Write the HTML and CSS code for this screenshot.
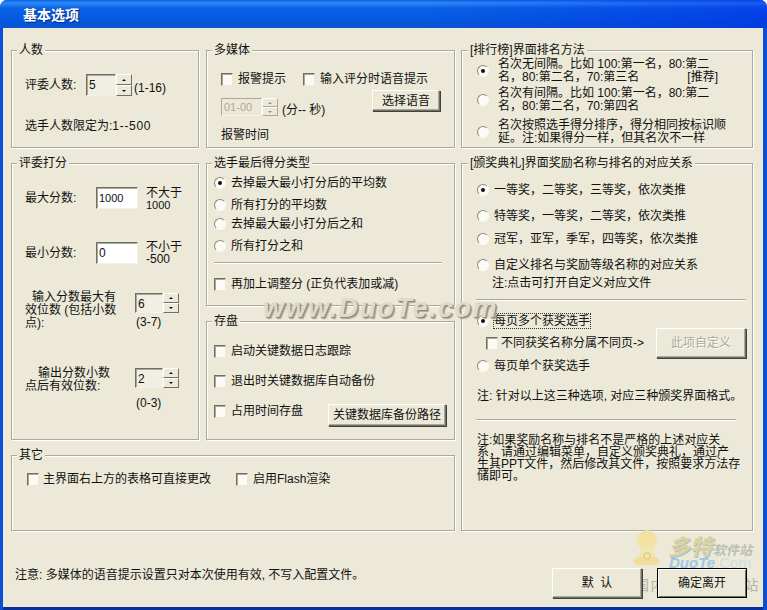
FILE: index.html
```html
<!DOCTYPE html>
<html lang="zh">
<head>
<meta charset="utf-8">
<title>基本选项</title>
<link rel="stylesheet" href="styles.css">
</head>
<body>
<div class="window">
  <div class="titlebar">基本选项</div>
  <div class="client">
    <section class="group g-people">
      <div class="legend">人数</div>
      <div class="row mt17 ml13">
        <span class="label w61 lh22">评委人数:</span>
        <span class="input flat w30 h22">5</span>
        <span class="spin h22"><i class="up"></i><i class="down"></i></span>
        <span class="unit lh22 ml2 mt3">(1-16)</span>
      </div>
      <p class="text mt20 ml13">选手人数限定为:<span class="wide">1--500</span></p>
    </section>

    <section class="group g-media">
      <div class="legend">多媒体</div>
      <div class="row mt15 ml14">
        <label class="opt gap5"><i class="chk"></i>报警提示</label>
        <label class="opt gap5 ml17"><i class="chk"></i>输入评分时语音提示</label>
      </div>
      <div class="row mt4 ml14">
        <span class="input off w41 h18 mt8">01-00</span>
        <span class="spin off h18 mt8"><i class="up"></i><i class="down"></i></span>
        <span class="unit ml4 mt13">(分-- 秒)</span>
        <button class="btn w68 h21 push mr14" type="button">选择语音</button>
      </div>
      <p class="text mt11 ml14">报警时间</p>
    </section>

    <section class="group g-rank">
      <div class="legend">[排行榜]界面排名方法</div>
      <label class="opt gap9 ml14 mt1 tight"><i class="radio on"></i><span>名次无间隔。比如 100:第一名，80:第二<br>名，80:第二名，70:第三名&emsp;&emsp;&emsp;&emsp;[推荐]</span></label>
      <label class="opt gap9 ml14 mt3 tight"><i class="radio"></i><span>名次有间隔。比如 100:第一名，80:第二<br>名，80:第二名，70:第四名</span></label>
      <label class="opt gap9 ml14 mt6 tight"><i class="radio"></i><span>名次按照选手得分排序，得分相同按标识顺<br>延。注:如果得分一样，但其名次不一样</span></label>
    </section>

    <section class="group g-score">
      <div class="legend">评委打分</div>
      <div class="row mt17 ml13">
        <span class="label w71 lh22">最大分数:</span>
        <span class="input w42 h22 num">1000</span>
        <span class="hint ml8">不大于<br><span class="num">1000</span></span>
      </div>
      <div class="row mt31 ml13">
        <span class="label w71 lh22">最小分数:</span>
        <span class="input w42 h22">0</span>
        <span class="hint ml8 mtn1">不小于<br>-500</span>
      </div>
      <div class="row mt26 ml13">
        <span class="label w110 tight indent7">输入分数最大有<br>效位数 (包括小数<br>点):</span>
        <div class="stack">
          <div class="row mt2">
            <span class="input flat w28 h20">6</span>
            <span class="spin h20"><i class="up"></i><i class="down"></i></span>
          </div>
          <span class="unit mt2 ml1">(3-7)</span>
        </div>
      </div>
      <div class="row mt37 ml13">
        <span class="label w110 tight indent13">输出分数小数<br>点后有效位数:</span>
        <div class="stack">
          <div class="row mt1">
            <span class="input flat w28 h20">2</span>
            <span class="spin h20"><i class="up"></i><i class="down"></i></span>
          </div>
          <span class="unit mt8 ml1">(0-3)</span>
        </div>
      </div>
    </section>

    <section class="group g-final">
      <div class="legend">选手最后得分类型</div>
      <label class="opt gap5 ml7 mt6"><i class="radio on"></i>去掉最大最小打分后的平均数</label>
      <label class="opt gap5 ml7 mt8"><i class="radio"></i>所有打分的平均数</label>
      <label class="opt gap5 ml7 mt5"><i class="radio"></i>去掉最大最小打分后之和</label>
      <label class="opt gap5 ml7 mt8"><i class="radio"></i>所有打分之和</label>
      <div class="sep w228 ml7 mt9"></div>
      <label class="opt gap5 ml7 mt13"><i class="chk"></i>再加上调整分 (正负代表加或减)</label>
    </section>

    <section class="group g-save">
      <div class="legend">存盘</div>
      <label class="opt gap5 ml7 mt16"><i class="chk"></i>启动关键数据日志跟踪</label>
      <label class="opt gap5 ml7 mt16"><i class="chk"></i>退出时关键数据库自动备份</label>
      <div class="row ml7 mt16">
        <label class="opt gap5"><i class="chk"></i>占用时间存盘</label>
        <button class="btn w118 h22 push mr8" type="button">关键数据库备份路径</button>
      </div>
    </section>

    <section class="group g-other">
      <div class="legend">其它</div>
      <div class="row ml15 mt10">
        <label class="opt gap4"><i class="chk"></i>主界面右上方的表格可直接更改</label>
        <label class="opt gap5 ml25"><i class="chk"></i>启用Flash渲染</label>
      </div>
    </section>

    <section class="group g-award">
      <div class="legend">[颁奖典礼]界面奖励名称与排名的对应关系</div>
      <label class="opt gap5 ml14 mt13"><i class="radio on"></i>一等奖，二等奖，三等奖，依次类推</label>
      <label class="opt gap5 ml14 mt12"><i class="radio"></i>特等奖，一等奖，二等奖，依次类推</label>
      <label class="opt gap5 ml14 mt9"><i class="radio"></i>冠军，亚军，季军，四等奖，依次类推</label>
      <label class="opt gap5 ml14 mt12"><i class="radio"></i>自定义排名与奖励等级名称的对应关系</label>
      <p class="text ml29 mt4">注:点击可打开自定义对应文件</p>
      <div class="sep w270 ml13 mt9"></div>
      <label class="opt gap5 ml14 mt13"><i class="radio on"></i><span class="focus">每页多个获奖选手</span></label>
      <div class="row center h30 ml23">
        <label class="opt gap3"><i class="chk"></i>不同获奖名称分属不同页-&gt;</label>
        <button class="btn w90 h30 push mr6" type="button" disabled>此项自定义</button>
      </div>
      <label class="opt gap5 ml14 mt1"><i class="radio"></i>每页单个获奖选手</label>
      <p class="text ml14 mt16">注: 针对以上这三种选项, 对应三种颁奖界面格式。</p>
      <div class="sep w260 ml13 mt16"></div>
      <p class="text para ml14 mt13">注:如果奖励名称与排名不是严格的上述对应关<br>系，请通过编辑菜单，自定义颁奖典礼，通过产<br>生其PPT文件，然后修改其文件，按照要求方法存<br>储即可。</p>
    </section>

    <footer class="footer">
      <p class="text note">注意: 多媒体的语音提示设置只对本次使用有效, 不写入配置文件。</p>
      <div class="actions">
        <button class="btn w90 h30" type="button">默&nbsp;&nbsp;认</button>
        <button class="btn w90 h30 primary" type="button">确定离开</button>
      </div>
    </footer>
  </div>

  <div class="watermark">www.DuoTe.com</div>
  <div class="logo">
    <svg class="mascot" width="28" height="42" viewBox="0 0 28 42" aria-hidden="true">
      <circle cx="15" cy="10" r="10" fill="#f3e2a4"/>
      <ellipse cx="15" cy="25" rx="8" ry="8" fill="#f4e6b2"/>
      <path d="M1 31 Q8 22 15 30 Q22 22 28 31 L25 35 L4 35 Z" fill="#f2dd9a"/>
      <circle cx="15" cy="26" r="3" fill="none" stroke="#e4cf86" stroke-width="1.5"/>
    </svg>
    <div class="brand-cn">多特<small>软件站</small></div>
    <div class="brand-en">DuoTe<span>.Com</span></div>
    <div class="brand-sub">国内最好的软件站</div>
  </div>
</div>
</body>
</html>
```

FILE: styles.css
```css
* { box-sizing: border-box; }
html, body { margin: 0; padding: 0; }
body { width: 767px; height: 610px; overflow: hidden; background: #fff; }
.window {
  position: relative; width: 767px; height: 610px; display: flex; flex-direction: column;
  background: #0a4fd6; border-radius: 7px 7px 0 0; overflow: hidden;
  font: 12px/14px "Liberation Sans", "Noto Sans CJK SC", sans-serif; color: #111;
}
.titlebar {
  height: 28px; padding-left: 23px; color: #fff; font-size: 14px; font-weight: bold; line-height: 31px;
  text-shadow: 1px 1px 1px #0a2a80;
  background:
    linear-gradient(90deg, transparent 55%, rgba(0, 30, 235, .45) 100%),
    linear-gradient(#0a5fe8 0, #2f8cf4 3px, #0a62e6 8px, #0558df 20px, #0a55d0 28px);
}
.client {
  flex: 1; margin: 0 4px 3px 3px; padding: 22px 0 0 8px; background: #ece9d8;
  display: grid; grid-template-columns: 188px 249px 291px; column-gap: 7px; row-gap: 15px;
  grid-template-rows: 98px 143px 119px 76px 1fr; box-shadow: 0 3px 0 #06309c;
}
.group { border: 1px solid #aca899; box-shadow: 1px 1px 0 #fff, inset 1px 1px 0 #fff; min-width: 0; }
.g-people { grid-column: 1; grid-row: 1; }
.g-media { grid-column: 2; grid-row: 1; }
.g-rank { grid-column: 3; grid-row: 1; margin-left: -1px; padding-left: 1px; }
.g-score { grid-column: 1; grid-row: 2 / 4; }
.g-final { grid-column: 2; grid-row: 2; }
.g-save { grid-column: 2; grid-row: 3; }
.g-other { grid-column: 1 / 3; grid-row: 4; }
.g-award { grid-column: 3; grid-row: 2 / 5; margin-left: -1px; padding-left: 1px; }
.legend { display: table; margin: -8px 0 0 5px; padding: 0 2px; height: 14px; background: #ece9d8; white-space: nowrap; }
.text { margin-bottom: 0; margin-right: 0; white-space: nowrap; }
p.text { margin-top: 0; }
.row { display: flex; align-items: flex-start; }
.row.center { align-items: center; }
.opt { display: flex; align-items: center; white-space: nowrap; }
.stack { display: flex; flex-direction: column; }
.label, .unit, .hint { white-space: nowrap; }
.hint { line-height: 12px; }
.num { font-size: 11px; }
.wide { letter-spacing: .7px; }
.tight { line-height: 13px; }
.indent7 { text-indent: 7px; }
.indent13 { text-indent: 13px; }
.para { line-height: 12px; }
.input {
  display: block; padding: 3px 0 0 2px; background: #fff; line-height: 14px;
  border: 1px solid; border-color: #716f64 #f4f2e8 #f4f2e8 #716f64;
  box-shadow: inset 1px 1px 0 #aca899;
}
.input.flat { background: #f1efe3; }
.input.off { background: #ece9d8; color: #aca899; padding-top: 1px; font-size: 11px; border-color: #aca899 #f4f2e8 #f4f2e8 #aca899; box-shadow: none; }
.spin { display: flex; flex-direction: column; width: 16px; }
.spin i {
  flex: 1; display: flex; align-items: center; justify-content: center; background: #ece9d8;
  border: 1px solid; border-color: #fff #716f64 #716f64 #fff;
}
.spin i::before { content: ""; border: 2px solid transparent; }
.spin .up::before { border-bottom-color: #111; border-top-width: 0; }
.spin .down::before { border-top-color: #111; border-bottom-width: 0; }
.spin.off i { border-color: #fff #aca899 #aca899 #fff; }
.spin.off i::before { opacity: .4; }
.chk {
  flex: none; display: block; width: 12px; height: 13px; background: #fbfaf5;
  border: 1px solid; border-color: #716f64 #ece9d8 #ece9d8 #716f64; box-shadow: inset 1px 1px 0 #aca899;
}
.radio {
  flex: none; display: flex; align-items: center; justify-content: center; width: 12px; height: 12px;
  border-radius: 50%; background: #fbfaf5; border: 1px solid; border-color: #8d8b7c #fbfaf5 #fbfaf5 #8d8b7c;
}
.radio.on::before { content: ""; width: 4px; height: 4px; border-radius: 50%; background: #111; }
.btn {
  display: block; padding: 0; background: #ece9d8; color: #111; font: inherit; flex: none;
  border: 1px solid; border-color: #fff #716f64 #716f64 #fff; box-shadow: 1px 1px 0 #404040, inset -1px -1px 0 #aca899;
}
.btn:disabled { color: #aca899; text-shadow: 1px 1px 0 #fff; }
.btn.primary { border-color: #000; box-shadow: inset 1px 1px 0 #fff, inset -1px -1px 0 #716f64; }
.push { margin-left: auto; }
.sep { height: 2px; background: #aca899; border-bottom: 1px solid #fff; }
.focus { outline: 1px dotted #333; outline-offset: 0; }
.footer {
  grid-column: 1 / 4; grid-row: 5; margin-top: -15px; display: flex; justify-content: space-between; align-items: flex-start;
  padding: 37px 6px 0 4px; min-height: 0; position: relative;
}
.note { margin-top: -6px; }
.actions { display: flex; gap: 15px; position: relative; z-index: 2; }
.watermark {
  position: absolute; left: 263px; top: 294px; font: italic bold 27px/28px "Liberation Sans", sans-serif; letter-spacing: 1.5px;
  color: #dedbcb; text-shadow: 1px 1px 0 #8f8c80, 2px 2px 1px #aaa79a; white-space: nowrap; pointer-events: none;
}
.logo { position: absolute; left: 632px; top: 530px; width: 135px; height: 80px; pointer-events: none; }
.mascot { position: absolute; left: 0; top: 0; }
.brand-cn { position: absolute; left: 36px; top: 5px; font: italic bold 22px/20px "Noto Sans CJK SC", sans-serif; color: #dcd39e; text-shadow: 1px 1px 0 #a9bcc0; white-space: nowrap; }
.brand-cn small { font-size: 13px; margin-left: 1px; color: #b9bfb4; text-shadow: none; }
.brand-en { position: absolute; left: 37px; top: 26px; font: italic bold 15px/13px "Liberation Sans", sans-serif; color: #9fc5ec; white-space: nowrap; }
.brand-en span { font-weight: normal; font-style: normal; color: #cfdcdf; }
.brand-sub { position: absolute; left: 3px; top: 46px; font: 14px/16px "Noto Sans CJK SC", sans-serif; letter-spacing: 1.6px; color: #b5b2a5; white-space: nowrap; }
.w28 { width: 28px; } .w30 { width: 30px; } .w41 { width: 41px; } .w42 { width: 42px; }
.w61 { width: 61px; } .w68 { width: 68px; } .w71 { width: 71px; } .w90 { width: 90px; }
.w110 { width: 110px; } .w118 { width: 118px; } .w228 { width: 228px; } .w260 { width: 260px; } .w270 { width: 270px; }
.h18 { height: 18px; } .h20 { height: 20px; } .h21 { height: 21px; } .h22 { height: 22px; } .h30 { height: 30px; }
.lh22 { line-height: 22px; }
.gap3 { gap: 3px; } .gap4 { gap: 4px; } .gap5 { gap: 5px; } .gap9 { gap: 9px; }
.ml1 { margin-left: 1px; } .ml2 { margin-left: 2px; } .ml4 { margin-left: 4px; } .ml7 { margin-left: 7px; } .ml8 { margin-left: 8px; }
.ml13 { margin-left: 13px; } .ml14 { margin-left: 14px; } .ml15 { margin-left: 15px; } .ml17 { margin-left: 17px; }
.ml23 { margin-left: 23px; } .ml25 { margin-left: 25px; } .ml29 { margin-left: 29px; }
.mr6 { margin-right: 6px; } .mr8 { margin-right: 8px; } .mr14 { margin-right: 14px; }
.mtn1 { margin-top: -1px; }
.mt1 { margin-top: 1px; } .mt2 { margin-top: 2px; } .mt3 { margin-top: 3px; } .mt4 { margin-top: 4px; } .mt5 { margin-top: 5px; }
.mt6 { margin-top: 6px; } .mt8 { margin-top: 8px; } .mt9 { margin-top: 9px; } .mt10 { margin-top: 10px; } .mt11 { margin-top: 11px; }
.mt12 { margin-top: 12px; } .mt13 { margin-top: 13px; } .mt15 { margin-top: 15px; } .mt16 { margin-top: 16px; } .mt17 { margin-top: 17px; }
.mt20 { margin-top: 20px; } .mt26 { margin-top: 26px; } .mt31 { margin-top: 31px; } .mt37 { margin-top: 37px; }
p.mt4 { margin-top: 4px; } p.mt11 { margin-top: 11px; } p.mt13 { margin-top: 13px; } p.mt16 { margin-top: 16px; } p.mt20 { margin-top: 20px; }
```
